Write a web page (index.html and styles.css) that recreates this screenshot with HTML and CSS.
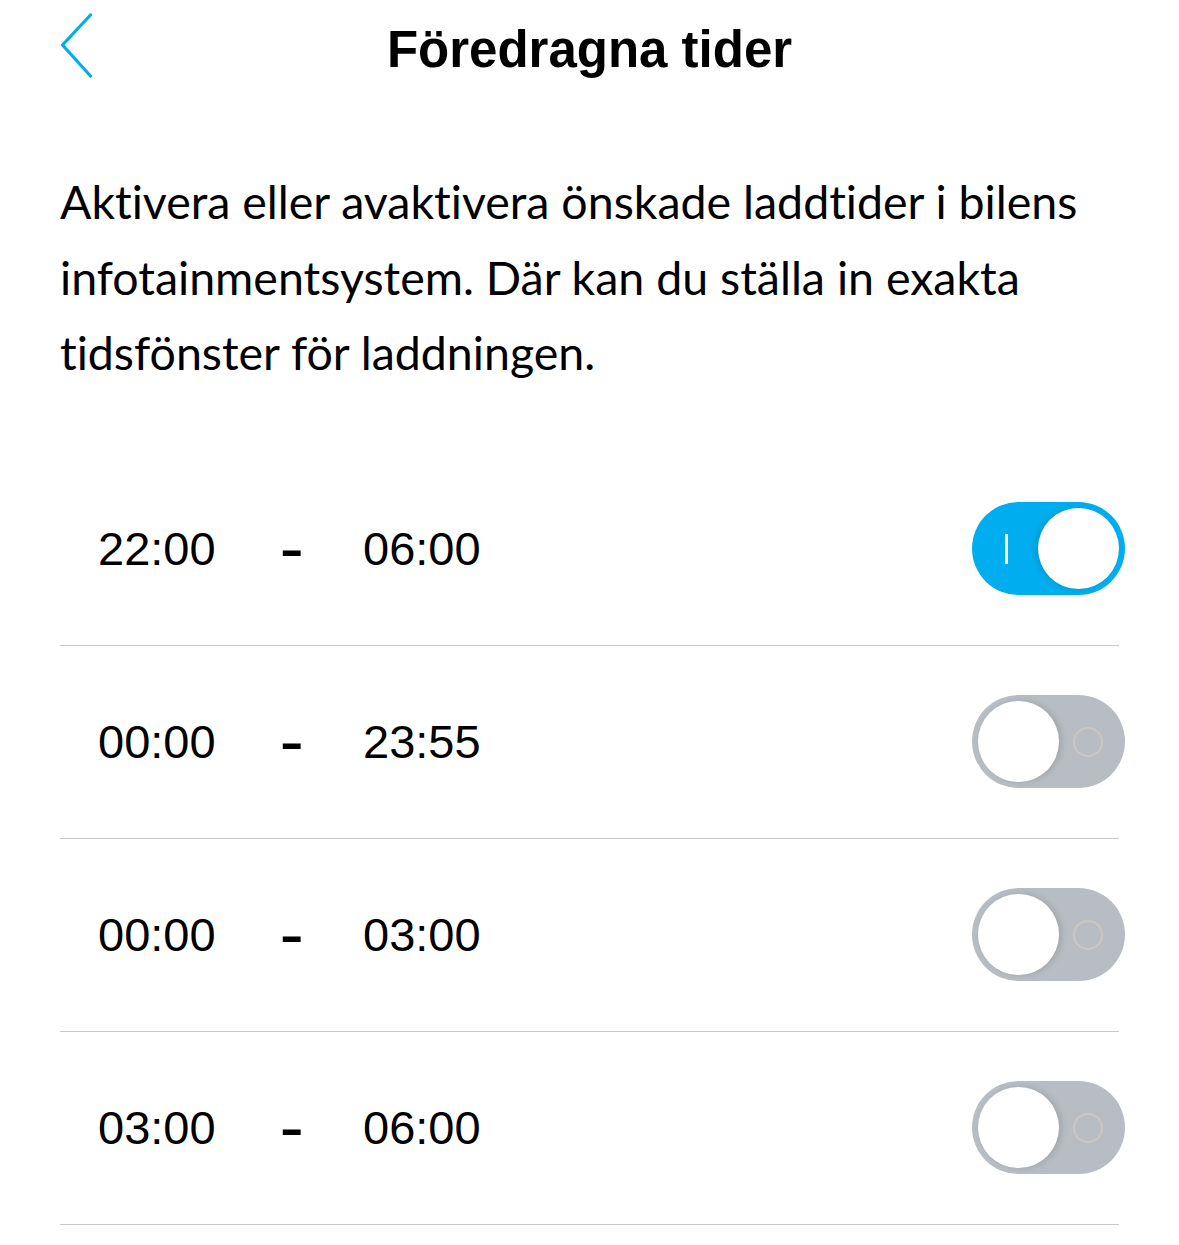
FILE: index.html
```html
<!DOCTYPE html>
<html lang="sv">
<head>
    <meta charset="UTF-8">
    <meta name="viewport" content="width=device-width, initial-scale=1.0">
    <title>Föredragna tider</title>
    <link rel="stylesheet" href="styles.css">
</head>
<body>
    <div class="header">
        <a class="back" href="#" aria-label="Tillbaka">
            <svg width="40" height="70" viewBox="0 0 40 70">
                <polyline points="30.5,2 2.5,32 30.5,63" fill="none" stroke="#00aeef" stroke-width="3.2" stroke-linecap="round" stroke-linejoin="round"/>
            </svg>
        </a>
        <h1>Föredragna tider</h1>
        <span></span>
    </div>

    <p class="intro">Aktivera eller avaktivera önskade laddtider i bilens infotainmentsystem. Där kan du ställa in exakta tidsfönster för laddningen.</p>

    <div class="slots">
        <div class="slot">
            <div class="times">
                <span class="from">22:00</span>
                <span class="dash">-</span>
                <span class="to">06:00</span>
            </div>
            <div class="toggle on">
                <span class="mark"></span>
                <span class="knob"></span>
            </div>
        </div>
        <div class="slot">
            <div class="times">
                <span class="from">00:00</span>
                <span class="dash">-</span>
                <span class="to">23:55</span>
            </div>
            <div class="toggle">
                <span class="knob"></span>
                <span class="mark"></span>
            </div>
        </div>
        <div class="slot">
            <div class="times">
                <span class="from">00:00</span>
                <span class="dash">-</span>
                <span class="to">03:00</span>
            </div>
            <div class="toggle">
                <span class="knob"></span>
                <span class="mark"></span>
            </div>
        </div>
        <div class="slot">
            <div class="times">
                <span class="from">03:00</span>
                <span class="dash">-</span>
                <span class="to">06:00</span>
            </div>
            <div class="toggle">
                <span class="knob"></span>
                <span class="mark"></span>
            </div>
        </div>
    </div>
</body>
</html>
```
FILE: styles.css
```css
body {
    margin: 0;
    background-color: #ffffff;
    color: #000000;
    font-family: Lato, "Noto Sans", sans-serif;
    font-variant-ligatures: none;
}
.header {
    display: grid;
    grid-template-columns: 1fr auto 1fr;
    align-items: center;
    height: 100px;
}
.back {
    display: flex;
    margin-left: 60px;
    margin-top: -5px;
    width: 40px;
}
.header h1 {
    margin: 0;
    font-family: "Liberation Sans", Arial, sans-serif;
    font-weight: bold;
    font-size: 51px;
    line-height: 60px;
}
.intro {
    margin: 64px 60px 0;
    font-size: 46.5px;
    line-height: 75.5px;
}
.slots {
    margin: 62px 60px 0;
}
.slot {
    display: flex;
    align-items: center;
    justify-content: space-between;
    height: 192px;
    border-bottom: 1px solid #c8c8c8;
}
.times {
    display: flex;
    padding-left: 38px;
    font-family: "Liberation Sans", Arial, sans-serif;
    font-size: 47px;
}
.from {
    width: 182px;
}
.dash {
    width: 55px;
    margin-right: 28px;
    font-weight: bold;
    transform: scaleX(1.5);
    transform-origin: left center;
}
.toggle {
    position: relative;
    display: flex;
    align-items: center;
    justify-content: space-between;
    box-sizing: border-box;
    width: 153px;
    height: 93px;
    margin-right: -6px;
    padding: 0 6px;
    border-radius: 47px;
    background-color: #b7bdc2;
}
.toggle.on {
    background-color: #00aeef;
    padding-left: 33px;
}
.knob {
    width: 81px;
    height: 81px;
    border-radius: 50%;
    background-color: #ffffff;
    box-shadow: 3px 0 6px rgba(0,0,0,0.12);
}
.toggle.on .knob {
    box-shadow: -3px 0 6px rgba(0,0,0,0.12);
}
.mark {
    box-sizing: border-box;
    width: 30px;
    height: 30px;
    margin-right: 16px;
    border: 2.5px solid #ccc7c1;
    border-radius: 50%;
}
.toggle.on .mark {
    width: 3px;
    height: 30px;
    margin: 0;
    border: none;
    border-radius: 0;
    background-color: #ffffff;
}
```
